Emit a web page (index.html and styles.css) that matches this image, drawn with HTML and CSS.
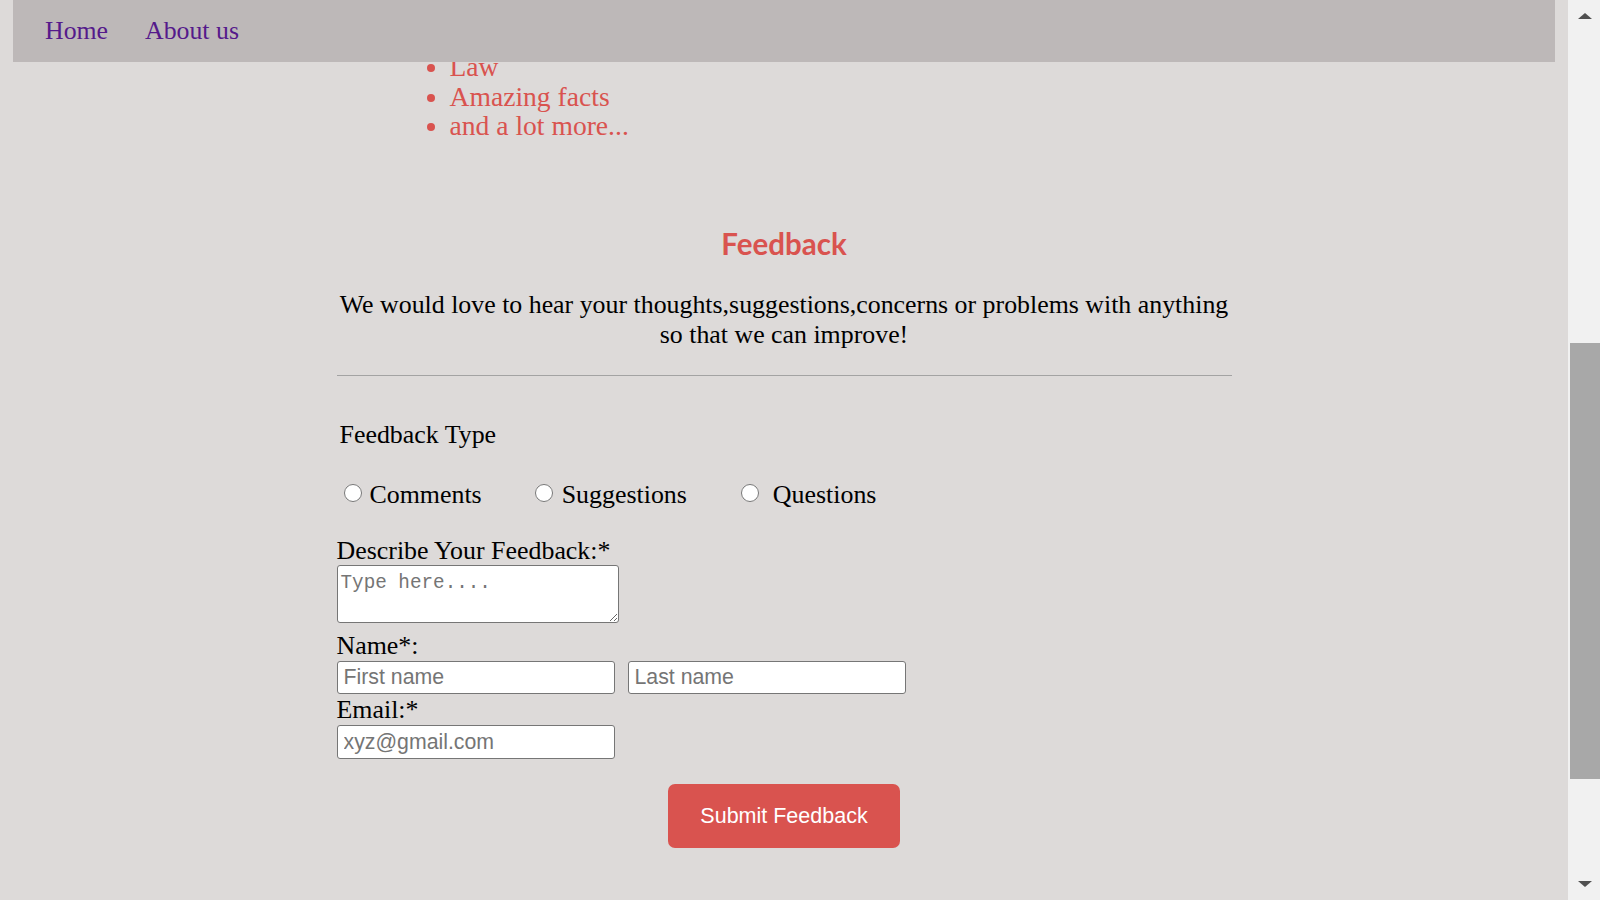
FILE: index.html
```html
<!DOCTYPE html>
<html lang="en">
<head>
<meta charset="utf-8">
<title>Feedback</title>
<link rel="stylesheet" href="styles.css">
</head>
<body>
<div class="screen">
  <div class="page">
    <nav class="topnav">
      <a href="#" class="navlink">Home</a>
      <a href="#" class="navlink">About us</a>
    </nav>
    <main class="content">
      <ul class="topics">
        <li>Law</li>
        <li>Amazing facts</li>
        <li>and a lot more...</li>
      </ul>
      <h2 class="title">Feedback</h2>
      <p class="intro">We would love to hear your thoughts,suggestions,concerns or problems with anything so that we can improve!</p>
      <hr class="rule">
      <form class="form">
        <div class="type-label">Feedback Type</div>
        <div class="radio-row">
          <label class="opt opt-1"><input type="radio" name="type" class="radio"><span>Comments</span></label>
          <label class="opt opt-2"><input type="radio" name="type" class="radio"><span>Suggestions</span></label>
          <label class="opt opt-3"><input type="radio" name="type" class="radio"><span>Questions</span></label>
        </div>
        <label class="field-label">Describe Your Feedback:*</label>
        <textarea class="area" placeholder="Type here...."></textarea>
        <label class="field-label name-label">Name*:</label>
        <div class="name-row">
          <input type="text" class="text-in" placeholder="First name">
          <input type="text" class="text-in" placeholder="Last name">
        </div>
        <label class="field-label email-label">Email:*</label>
        <input type="text" class="text-in email-in" placeholder="xyz@gmail.com">
        <div class="submit-row">
          <button type="button" class="submit">Submit Feedback</button>
        </div>
      </form>
    </main>
  </div>
  <div class="scrollbar">
    <svg class="arrow" width="16" height="10" viewBox="0 0 16 10"><polygon points="8,2 15,8 1,8" fill="#505050"/></svg>
    <div class="track">
      <div class="thumb"></div>
    </div>
    <svg class="arrow" width="16" height="10" viewBox="0 0 16 10"><polygon points="1,2 15,2 8,8" fill="#505050"/></svg>
  </div>
</div>
</body>
</html>
```
FILE: styles.css
```css
html, body {
  margin: 0;
  padding: 0;
}
body {
  background: #dddad9;
  font-family: "Liberation Serif", "Times New Roman", serif;
  color: #000;
}
.screen {
  display: flex;
  width: 1600px;
  height: 900px;
  overflow: hidden;
}
.page {
  flex: 1;
  position: relative;
  overflow: hidden;
  background: #dddad9;
}
.topnav {
  position: absolute;
  top: 0;
  left: 13px;
  right: 13px;
  height: 62px;
  background: #bdb8b8;
  display: flex;
  align-items: center;
  padding-left: 32px;
  gap: 37px;
  z-index: 2;
}
.navlink {
  color: #551a8b;
  text-decoration: none;
  font-family: "Liberation Serif", serif;
  font-size: 25.8px;
  line-height: 30px;
}
.content {
  width: 895px;
  margin: 0 auto;
}
.topics {
  margin: 0;
  padding: 52px 0 0 113px;
  color: #d9534f;
  font-size: 27.6px;
  line-height: 29.7px;
}
.title {
  margin: 86px 0 0;
  text-align: center;
  color: #d9534f;
  font-family: "Lato", "Open Sans", sans-serif;
  font-weight: 700;
  font-size: 29.5px;
  line-height: 34px;
}
.intro {
  margin: 29px 0 0;
  text-align: center;
  font-size: 25.87px;
  line-height: 29.5px;
}
.rule {
  margin: 26px 0 0;
  border: 0;
  height: 1px;
  background: #a3a3a3;
}
.form {
  font-size: 25.9px;
  line-height: 30px;
}
.type-label {
  margin-top: 44px;
  padding-left: 3px;
}
.radio-row {
  display: flex;
  align-items: center;
  margin-top: 30px;
  padding-left: 7px;
}
.opt {
  display: flex;
  align-items: center;
}
.radio {
  width: 18px;
  height: 18px;
  margin: 0 0 5px 0;
}
.opt-1 { margin-right: 53px; }
.opt-1 .radio { margin-right: 8px; }
.opt-2 { margin-right: 54px; }
.opt-2 .radio { margin-right: 9px; }
.opt-3 .radio { margin-right: 14px; }
.field-label {
  display: block;
  margin-top: 26px;
}
.area {
  display: block;
  box-sizing: border-box;
  width: 282px;
  height: 58px;
  margin-top: -1px;
  padding: 6px 3px 3px;
  border: 1px solid #767676;
  border-radius: 3px;
  background: #fff;
  font-family: "Liberation Mono", "DejaVu Sans Mono", monospace;
  font-size: 19.3px;
  line-height: 22px;
  resize: both;
}
.area::placeholder {
  color: #757575;
}
.name-label {
  margin-top: 8px;
}
.name-row {
  display: flex;
  gap: 13px;
  margin-top: 0;
}
.text-in {
  display: block;
  box-sizing: border-box;
  width: 278px;
  height: 33px;
  padding: 1px 6px;
  border: 1px solid #767676;
  border-radius: 3px;
  background: #fff;
  font-family: "Liberation Sans", Arial, sans-serif;
  font-size: 21.3px;
}
.text-in::placeholder {
  color: #757575;
}
.email-label {
  margin-top: 1px;
}
.email-in {
  margin-top: 0;
  height: 34px;
}
.submit-row {
  display: flex;
  justify-content: center;
  margin-top: 25px;
}
.submit {
  width: 232px;
  height: 64px;
  border: 0;
  border-radius: 7px;
  background: #d9534f;
  color: #fff;
  font-family: "Liberation Sans", Arial, sans-serif;
  font-size: 21.5px;
  padding: 0;
}
.scrollbar {
  width: 32px;
  background: #f1f1f1;
  display: flex;
  flex-direction: column;
  align-items: center;
}
.arrow {
  display: block;
  margin: 11px 0 0 2px;
}
.track {
  flex: 1;
  width: 100%;
  display: flex;
  justify-content: flex-end;
}
.thumb {
  width: 30px;
  height: 436px;
  margin-top: 322px;
  background: #a8a8a8;
}
.scrollbar .arrow:last-child {
  margin: 0 0 11px 2px;
}
```
